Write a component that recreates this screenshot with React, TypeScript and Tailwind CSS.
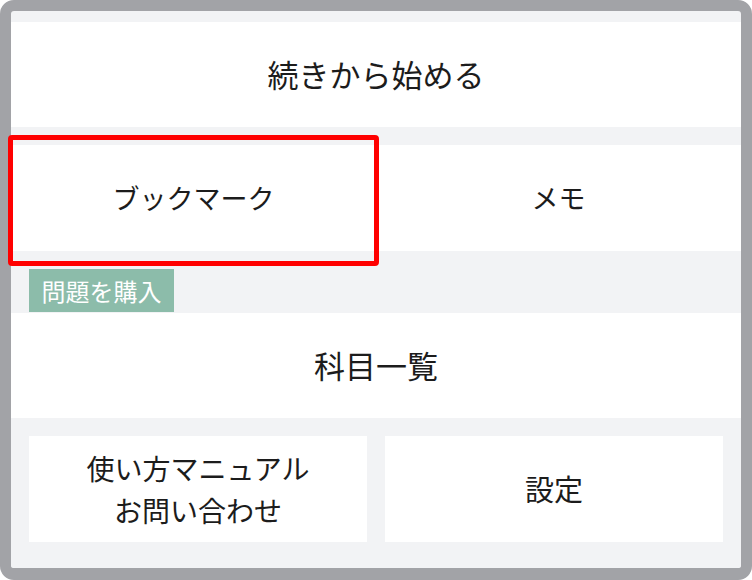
export default function App() {
  return (
    <div
      className="w-[752px] h-[580px] rounded-[14px] border-[11px] border-b-[12px] border-[#a2a3a7] bg-[#f2f3f5] flex flex-col text-[#1c1c1c]"
      style={{ fontFamily: '"Noto Sans CJK JP", "Noto Sans", sans-serif' }}
    >
      <div className="pt-[11px]" />
      <button className="h-[105px] bg-white flex items-center justify-center text-[31px]">
        続きから始める
      </button>

      <div className="mt-[18px] h-[106px] grid grid-cols-2 bg-white">
        <div className="relative flex items-center justify-center">
          <span className="text-[27px]">ブックマーク</span>
          <div className="absolute left-[-3px] right-[-3px] top-[-10px] bottom-[-15px] border-[5px] border-[#ff0000] rounded-[4px]" />
        </div>
        <div className="flex items-center justify-center">
          <span className="text-[27px]">メモ</span>
        </div>
      </div>

      <div className="h-[62px] pl-[18px] pt-[18px]">
        <div className="h-[43px] w-[145px] bg-[#8cbcaa] text-white text-[24px] flex items-center justify-center">
          問題を購入
        </div>
      </div>

      <div className="h-[105px] bg-white flex items-center justify-center text-[31px]">
        科目一覧
      </div>

      <div className="flex-1 p-[18px]">
        <div className="grid grid-cols-2 gap-[18px]">
          <div className="h-[106px] bg-white flex flex-col items-center justify-center text-[28px] leading-[42px]">
            <span>使い方マニュアル</span>
            <span>お問い合わせ</span>
          </div>
          <div className="h-[106px] bg-white flex items-center justify-center text-[29px]">
            設定
          </div>
        </div>
      </div>
    </div>
  )
}
